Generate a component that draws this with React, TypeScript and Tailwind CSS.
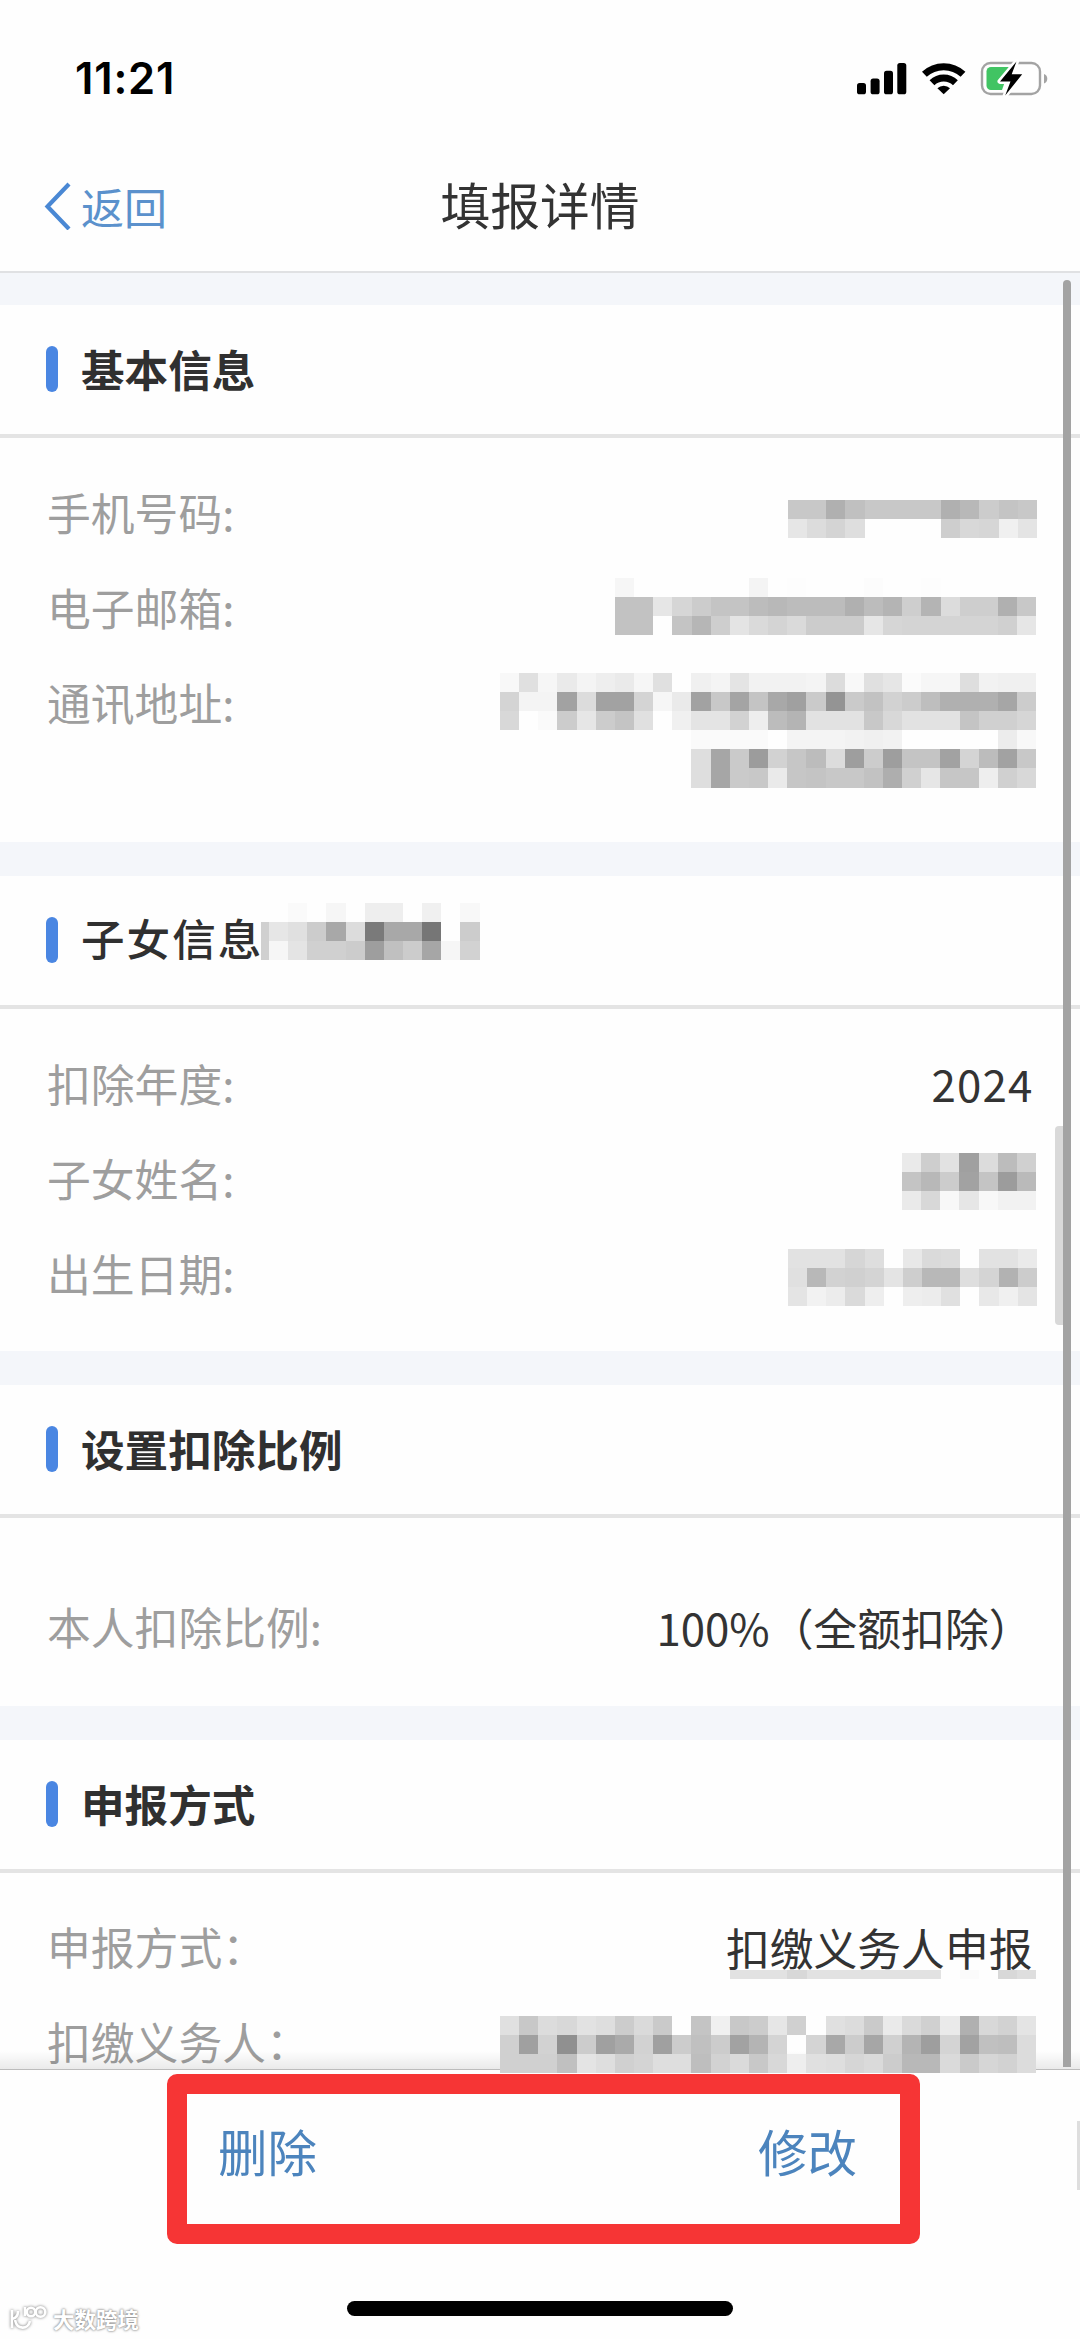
import React from "react";

const CELL = 19.15;

interface MosaicProps {
  /** One string per row, two hex digits of grey per cell */
  rows: string[];
  className?: string;
  cellHeight?: number;
}

function Mosaic({ rows, className = "", cellHeight = 19.1 }: MosaicProps) {
  const cells = rows.map((row) => row.split(" "));
  const width = cells[0].length * CELL;
  const height = cells.length * cellHeight;

  return (
    <svg
      className={`z-10 shrink-0 ${className}`}
      width={width}
      height={height}
      viewBox={`0 0 ${width} ${height}`}
      shapeRendering="crispEdges"
    >
      {cells.map((row, y) =>
        row.map((grey, x) =>
          grey === "ff" ? null : (
            <rect
              key={`${x}-${y}`}
              x={x * CELL}
              y={y * cellHeight}
              width={CELL}
              height={cellHeight}
              fill={`#${grey}${grey}${grey}`}
            />
          )
        )
      )}
    </svg>
  );
}

const PHONE = [
  "c8 c8 b0 c0 c8 c8 c8 c8 b0 b8 cc c4 c8",
  "e6 dc d4 de ff ff ff ff ce d8 d6 f0 e4",
];

const EMAIL = [
  "f6 ff ff ff ff ff ff f4 ff fd ff ff ff fc ff ff fd ff ff ff ff ff",
  "c2 c2 e6 d6 cc c4 c4 bc b8 bc bc bc b0 bc b4 ce b4 dc ce ce b0 c8",
  "c2 c2 ff c4 b6 ce e4 da d4 da cc cc cc e6 d6 d4 d4 d4 d4 d4 d0 e6",
];

const ADDRESS = [
  "f8 e0 f6 ea f4 ee ea f6 e0 ff f0 f4 e4 f2 f2 f2 f4 dc f8 e0 e6 fb f6 f6 de f2 f0 f0",
  "d4 f4 f4 a2 dc a2 a2 d4 f6 ea a2 c8 a4 c4 a8 a0 ca 94 ca c2 d2 cc be b0 b0 b0 a6 cc",
  "d8 ff fa cc e6 cc c4 e0 ff f0 e4 e4 d2 ee bc b4 e2 e2 e2 c8 d8 e2 e2 e2 c4 d0 d0 d6",
  "ff ff ff ff ff ff ff ff ff ff fa fa fa fa ff f4 f4 f4 f2 f0 f2 ff ff ff ff ff ec f8",
  "ff ff ff ff ff ff ff ff ff ff de a6 ca 9c d2 c6 bc dc 9e cc 9e c4 c4 a2 d4 bc a2 c8",
  "ff ff ff ff ff ff ff ff ff ff de a6 ca c8 ea c6 c4 c8 c8 c2 ae d0 e6 c6 c6 ee d0 d8",
];

const CHILD = [
  "ff fa ff f6 ff ee ee ff f0 ff f8",
  "e6 e0 cc a8 dc 7a a8 a8 76 ff cc",
  "f6 e4 d0 d0 cc 9e c0 cc a6 f6 d2",
];

const NAME = [
  "ea ce e2 a0 dc bc d0",
  "c4 b8 cc a2 c4 9c ba",
  "ea d8 f8 e6 f8 f2 f2",
];

const BIRTHDAY = [
  "e2 e2 e2 d6 de ff e8 da dc ff e2 e2 ea",
  "e0 b8 d2 d0 d4 e4 ce b8 b8 de d4 b2 cc",
  "e4 f2 ec da ee ff ee ec e0 ff e8 f0 e4",
];

const METHOD_STRIP = ["e2 e2 e2 d8 e2 e2 e2 e2 e2 e2 e2 ff fb ff d8 de"];

const EMPLOYER = [
  "e0 c8 dc d8 e2 de cc da ca ff c4 f0 c8 cc e6 d0 ff e0 dc ca ea da d0 ea b0 d8 d2 e4",
  "d0 a0 d2 90 cc a0 aa d2 a0 cc c0 cc a2 b4 d4 ff d4 a8 cc a6 d0 b4 9e d4 a2 c0 be dc",
  "d0 d0 d0 c0 e4 de d0 d4 de de be d2 da c8 d8 ee e0 de d6 da cc b8 b8 da ca d6 d2 dc",
];

function StatusIcons() {
  return (
    <svg width="205" height="45" viewBox="850 55 205 45" fill="none">
      <g fill="#000">
        <rect x="857" y="83" width="9" height="11.3" rx="2.6" />
        <rect x="870.6" y="78.6" width="9" height="15.7" rx="2.6" />
        <rect x="884" y="70.8" width="9" height="23.5" rx="2.6" />
        <rect x="897.3" y="63" width="9" height="31.3" rx="2.6" />
        <path d="M943.7 94.3 937.4 88.2A9 9 0 0 1 950 88.2Z" />
      </g>
      <path
        d="M924.4 74.3A28.2 28.2 0 0 1 963 74.3M932 82.7A17 17 0 0 1 955.4 82.7"
        stroke="#000"
        strokeWidth="7"
      />
      <rect x="982" y="63" width="58" height="31" rx="8.5" stroke="#a3a3a3" strokeWidth="2.4" />
      <path d="M1044 74a5 5 0 0 1 0 9.4z" fill="#a3a3a3" />
      <path d="M991 67h19l-8 23h-11a4.5 4.5 0 0 1-4.5-4.5v-14a4.5 4.5 0 0 1 4.5-4.5z" fill="#41c463" />
      <path
        d="M1016.5 61.5 1000 81.4h10.500l-5.300 14.100 17-21.200h-10.500z"
        fill="#000"
        stroke="#fff"
        strokeWidth="5"
        paintOrder="stroke"
        strokeLinejoin="round"
      />
    </svg>
  );
}

interface SectionProps {
  title: string;
  titleClass?: string;
  bodyClass: string;
  extra?: React.ReactNode;
  children: React.ReactNode;
}

function Section({
  title,
  titleClass = "mt-[33px] font-bold",
  bodyClass,
  extra,
  children,
}: SectionProps) {
  return (
    <section>
      <div className="flex h-[133px] items-start border-b-4 border-[#e4e4e4] pl-[46px]">
        <div className="mt-[41px] h-[46px] w-3 rounded-full bg-[#4a86e2]" />
        <h2
          className={`ml-[23px] text-[43.6px] leading-[60px] whitespace-nowrap text-[#303030] ${titleClass}`}
        >
          {title}
        </h2>
        {extra}
      </div>
      <div className={bodyClass}>{children}</div>
    </section>
  );
}

function Row({ label, children }: { label: string; children: React.ReactNode }) {
  return (
    <div className="flex h-[95px] items-start justify-between pr-[43.5px] pl-[47px]">
      <span className="text-[43.8px] leading-[89px] whitespace-nowrap text-[#9e9e9e]">{label}</span>
      {children}
    </div>
  );
}

function Value({ children }: { children: React.ReactNode }) {
  return (
    <span className="mr-1 text-[43.8px] leading-[90px] whitespace-nowrap text-[#333]">
      {children}
    </span>
  );
}

const Divider = () => <div className="h-[34px] bg-[#f4f6fa]" />;

export default function App() {
  return (
    <div className="relative flex h-[2339px] w-[1080px] flex-col overflow-hidden bg-[#fefefe] font-['Noto_Sans_CJK_SC',sans-serif]">
      {/* Status bar */}
      <div className="flex h-[155px] shrink-0 items-start justify-between pt-[55px] pr-[25px] pl-[75px]">
        <span className="font-[Inter,sans-serif] text-[43.5px] leading-[47px] font-semibold tracking-[0.8px] text-black">
          11:21
        </span>
        <StatusIcons />
      </div>

      {/* Navigation bar */}
      <header className="grid h-[118px] shrink-0 grid-cols-3 items-start border-b-2 border-[#e0e1e3]">
        <a className="flex items-center pt-[21px] pl-[43px] text-[#5b91cc]">
          <svg width="28" height="48" viewBox="0 0 28 48" fill="none">
            <path d="M26 2 4.5 24.5 26 47" stroke="#4a88d4" strokeWidth="4.2" />
          </svg>
          <span className="ml-[10px] text-[43px] leading-[60px]">返回</span>
        </a>
        <h1 className="pt-[13px] text-center text-[49.8px] leading-[70px] text-[#333]">填报详情</h1>
      </header>

      {/* Scrolling details */}
      <main className="relative h-[1796px] shrink-0">
        <div className="h-8 bg-[#f4f6fa]" />
        <Section title="基本信息" bodyClass="h-[404px] pt-[30px]">
          <Row label="手机号码:">
            <Mosaic rows={PHONE} className="relative mt-8" />
          </Row>
          <Row label="电子邮箱:">
            <Mosaic rows={EMAIL} className="relative mt-[15px]" />
          </Row>
          <Row label="通讯地址:">
            <Mosaic rows={ADDRESS} className="relative mt-[15px]" />
          </Row>
        </Section>

        <Divider />
        <Section
          title="子女信息"
          titleClass="mt-[31px] font-medium tracking-[2px]"
          bodyClass="h-[342px] pt-[30px]"
          extra={
            <>
              <div className="mt-[46px] -ml-[2px] h-[38px] w-2 bg-[#d0d0d0]" />
              <Mosaic rows={CHILD} className="relative mt-[27px]" />
            </>
          }
        >
          <Row label="扣除年度:">
            <span className="mr-[3px] text-[43.8px] leading-[89px] tracking-[1.2px] text-[#333]">
              2024
            </span>
          </Row>
          <Row label="子女姓名:">
            <Mosaic rows={NAME} className="relative mt-[19px]" />
          </Row>
          <Row label="出生日期:">
            <Mosaic rows={BIRTHDAY} className="relative mt-5" />
          </Row>
        </Section>

        <Divider />
        <Section title="设置扣除比例" bodyClass="h-[188px] pt-[64px]">
          <Row label="本人扣除比例:">
            <Value>100%（全额扣除）</Value>
          </Row>
        </Section>

        <Divider />
        <Section title="申报方式" bodyClass="pt-[29px]">
          <Row label="申报方式：">
            <div className="relative">
              <Value>扣缴义务人申报</Value>
              <Mosaic rows={METHOD_STRIP} cellHeight={9} className="absolute top-[68px] right-0" />
            </div>
          </Row>
          <Row label="扣缴义务人：">
            <Mosaic rows={EMPLOYER} className="relative mt-[19px]" />
          </Row>
        </Section>

        {/* Shadow cast by the action bar */}
        <div className="absolute bottom-0 left-0 h-[18px] w-full bg-linear-to-b from-transparent to-black/8" />

        {/* Scroll indicators */}
        <div className="absolute top-[7px] right-[9px] bottom-[2px] z-20 w-2 rounded-t-full bg-[#a3a3a3]" />
        <div className="absolute top-[853px] right-[17px] h-[199px] w-2 rounded-l-sm bg-[#d9d9d9]" />
      </main>

      {/* Action bar */}
      <footer className="relative flex h-[270px] shrink-0 flex-col items-center border-t border-[#bcbcbc]">
        <div className="mt-1 mr-[-7px] flex h-[170px] w-[753px] items-start justify-between rounded-[10px] border-[20px] border-[#f63535] px-[31px] pt-[22px] text-[49.5px] leading-[70px] text-[#4c84bd]">
          <button>删除</button>
          <button className="mr-3">修改</button>
        </div>
        <div className="mt-[57px] h-[15px] w-[386px] rounded-full bg-black" />
        <div className="absolute top-[51px] right-0 h-[69px] w-[3px] bg-[#dedede]" />

        {/* Publisher mark */}
        <div className="absolute bottom-[5px] left-[9px] flex items-center gap-1 text-white">
          <svg
            width="40"
            height="30"
            viewBox="0 0 40 30"
            fill="none"
            stroke="#fff"
            strokeWidth="2.6"
            className="drop-shadow-[0_0_1.5px_#777]"
          >
            <path d="M3 6v18M3 15c5-1 6-4 6-8M6 16c2 10 13 10 15 1M16 3v9" />
            <circle cx="22" cy="8" r="4.2" />
            <circle cx="31.5" cy="8" r="4.8" />
          </svg>
          <span className="text-[21.5px] leading-[30px] font-bold [text-shadow:0_0_2px_#888,0_0_3px_#999]">
            大数跨境
          </span>
        </div>
      </footer>
    </div>
  );
}
